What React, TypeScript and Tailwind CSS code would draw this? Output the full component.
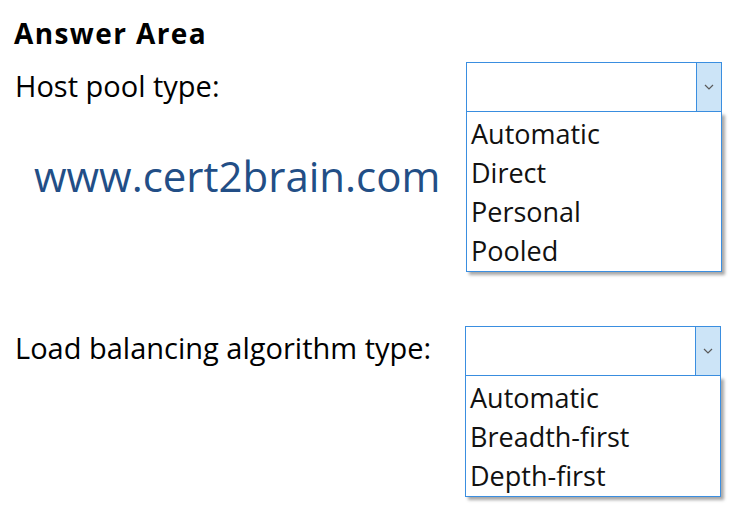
import React from "react";

function Chevron() {
  return (
    <svg width="10" height="6" viewBox="0 0 10 6" fill="none">
      <path d="M1 1 L5 5 L9 1" stroke="#5a5a5a" strokeWidth="1.2" />
    </svg>
  );
}

function Dropdown({ items }: { items: string[] }) {
  return (
    <div className="w-[256px]">
      <div className="flex h-[50px] border border-[#3a8ee0] bg-white">
        <div className="flex-1" />
        <div className="flex w-[25px] items-center justify-center border-l border-[#3a8ee0] bg-[#cce4f7]">
          <Chevron />
        </div>
      </div>
      <div className="border border-t-0 border-[#3a8ee0] bg-white pt-[2px] pb-[1px] pl-[4px] shadow-[3px_3px_3px_rgba(0,0,0,0.35)]">
        {items.map((it) => (
          <div key={it} className="h-[39px] leading-[39px] text-[27px] text-[#111]">
            {it}
          </div>
        ))}
      </div>
    </div>
  );
}

export default function App() {
  return (
    <div
      className="w-[752px] h-[521px] bg-white pt-[16px] pl-[14px] text-black"
      style={{ fontFamily: "'Open Sans', Lato, sans-serif" }}
    >
      <div className="text-[28px] font-bold leading-[34px] tracking-[1.4px]">Answer Area</div>
      <div className="mt-[12px] flex">
        <div className="w-[452px] pl-[1px]">
          <div className="mt-[8px] text-[29px] leading-[32px]">Host pool type:</div>
          <div className="mt-[52px] pl-[19px] text-[42px] leading-[44px] text-[#224e86]">
            www.cert2brain.com
          </div>
        </div>
        <Dropdown items={["Automatic", "Direct", "Personal", "Pooled"]} />
      </div>
      <div className="mt-[54px] flex">
        <div className="w-[451px] pl-[1px]">
          <div className="mt-[6px] text-[29px] leading-[32px]">Load balancing algorithm type:</div>
        </div>
        <Dropdown items={["Automatic", "Breadth-first", "Depth-first"]} />
      </div>
    </div>
  );
}
